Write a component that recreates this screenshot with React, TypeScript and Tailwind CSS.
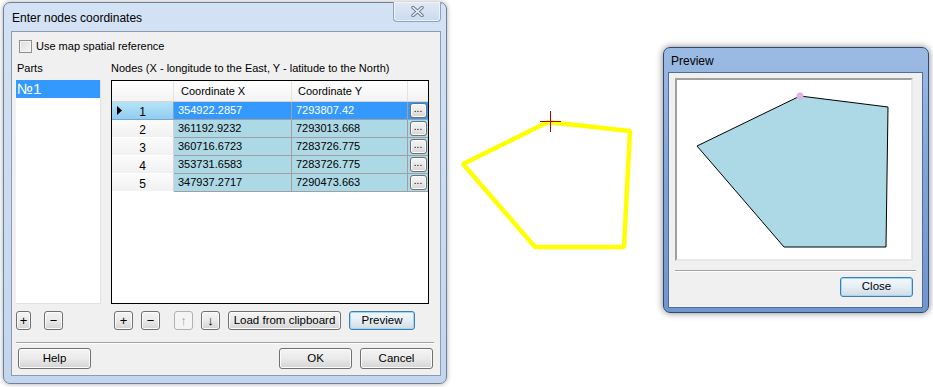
import React from "react";
import clsx from "clsx";

const rows = [
  ["1", "354922.2857", "7293807.42"],
  ["2", "361192.9232", "7293013.668"],
  ["3", "360716.6723", "7283726.775"],
  ["4", "353731.6583", "7283726.775"],
  ["5", "347937.2717", "7290473.663"],
];

interface BtnProps {
  className?: string;
  focused?: boolean;
  disabled?: boolean;
  children?: React.ReactNode;
}

const Btn: React.FC<BtnProps> = ({ className, focused, disabled, children }) => (
  <div
    className={clsx(
      "flex items-center justify-center rounded-[3px] border leading-none",
      disabled
        ? "border-[#adb2b5] bg-[#f4f4f4] text-[#a0a0a0]"
        : focused
        ? "border-[#3c7fb1] bg-linear-to-b from-[#f2f8fc] via-[#e6eef5] to-[#d2dbe3] shadow-[inset_0_0_0_1px_#9fd8f5] text-black"
        : "border-[#707070] bg-linear-to-b from-[#f4f4f4] via-[#eaeaea] to-[#d4d4d4] shadow-[inset_0_0_0_1px_#fbfbfb] text-black",
      className
    )}
  >
    {children}
  </div>
);

const CoordinatesDialog: React.FC = () => (
  <div className="ml-[3px] mt-[2px] w-[444px] h-[382px] shrink-0 flex flex-col rounded-[7px] border border-[#6f8099] bg-linear-to-b from-[#d3e2f4] to-[#c3d6ee] pl-[7px] pr-[5px] pb-[7px] shadow-[0_0_5px_rgba(0,0,0,0.35)]">
    {/* Title bar */}
    <div className="h-[28px] flex justify-between">
      <span className="self-center pl-[1px] pt-[2px] text-[12px] text-black">Enter nodes coordinates</span>
      <div className="-mt-[1px] w-[48px] h-[20px] flex items-center justify-center rounded-b-[4px] border border-t-0 border-[#8ea2bd] bg-linear-to-b from-[#e0eaf6] to-[#cbdaee] shadow-[inset_0_0_0_1px_#eef4fb]">
        <svg width="13" height="11" viewBox="0 0 13 11">
          <path d="M2 1.5 L11 9.5 M11 1.5 L2 9.5" stroke="#6a7a8e" strokeWidth="3.4" strokeLinecap="round" />
          <path d="M2 1.5 L11 9.5 M11 1.5 L2 9.5" stroke="#f4f7fb" strokeWidth="1.5" strokeLinecap="round" />
        </svg>
      </div>
    </div>

    {/* Client area */}
    <div className="w-[430px] h-[345px] border border-[#8d9bb0] bg-[#f0f0f0] flex flex-col text-[11px]">
      {/* Checkbox */}
      <div className="mt-[8px] ml-[7px] h-[13px] flex items-center gap-[4px]">
        <div className="w-[13px] h-[13px] border border-[#8e8f8f] bg-linear-to-br from-[#dcdcdc] to-[#f6f6f6] shadow-[inset_0_0_0_1px_#f4f4f4]" />
        <span className="leading-none text-black">Use map spatial reference</span>
      </div>

      <div className="mt-[8px] flex">
        {/* Parts */}
        <div className="ml-[4px] w-[85px] flex flex-col">
          <span className="h-[14px] pl-[1px] leading-[14px] text-black">Parts</span>
          <div className="mt-[5px] h-[224px] bg-white border-r border-b border-[#e2e2e2]">
            <div className="h-[18px] bg-[#3399ff] pl-[1px] text-[15px] leading-[18px] text-white">№1</div>
          </div>
          <div className="mt-[7px] flex gap-[13px]">
            <Btn className="w-[15px] h-[19px] text-[13px]">+</Btn>
            <Btn className="w-[19px] h-[19px] text-[13px]">−</Btn>
          </div>
        </div>

        {/* Nodes */}
        <div className="ml-[10px] w-[318px] flex flex-col">
          <span className="h-[14px] leading-[14px] text-black whitespace-nowrap">
            Nodes (X - longitude to the East, Y - latitude to the North)
          </span>
          <div className="mt-[5px] h-[224px] border border-black bg-white flex flex-col">
            {/* Header */}
            <div className="h-[21px] flex border-b border-[#d5d5d5] bg-linear-to-b from-white to-[#f3f3f3] text-[11px] text-black">
              <div className="w-[62px] border-r border-[#e3e3e3]" />
              <div className="w-[118px] pl-[7px] flex items-center border-r border-[#e3e3e3]">Coordinate X</div>
              <div className="w-[116px] pl-[6px] flex items-center border-r border-[#e3e3e3]">Coordinate Y</div>
              <div className="w-[18px]" />
            </div>
            {rows.map(([n, x, y], i) => {
              const sel = i === 0;
              return (
                <div key={n} className="h-[18px] flex text-[11px]">
                  <div
                    className={clsx(
                      "w-[62px] relative flex items-center justify-center border-r border-b",
                      sel
                        ? "bg-linear-to-b from-[#b8e3f8] to-[#8fcdf0] border-[#7aa7c4]"
                        : "bg-linear-to-b from-[#fbfbfb] to-[#f1f1f1] border-r-[#d5d5d5] border-b-white"
                    )}
                  >
                    {sel && (
                      <svg className="absolute left-[5px] top-[4px]" width="5" height="9" viewBox="0 0 5 9">
                        <path d="M0 0 L5 4.5 L0 9 Z" fill="#000" />
                      </svg>
                    )}
                    <span className="pt-[3px] text-[12px] text-black">{n}</span>
                  </div>
                  <div
                    className={clsx(
                      "w-[118px] pl-[4px] flex items-center border-r border-b border-[#a0a0a0]",
                      sel ? "bg-[#3399ff] text-white" : "bg-[#add8e6] text-black"
                    )}
                  >
                    {x}
                  </div>
                  <div
                    className={clsx(
                      "w-[116px] pl-[4px] flex items-center border-r border-b border-[#a0a0a0]",
                      sel ? "bg-[#3399ff] text-white" : "bg-[#add8e6] text-black"
                    )}
                  >
                    {y}
                  </div>
                  <div
                    className={clsx(
                      "w-[20px] flex items-center justify-center border-b border-[#a0a0a0]",
                      sel ? "bg-[#3399ff]" : "bg-[#add8e6]"
                    )}
                  >
                    <Btn className="w-[17px] h-[15px] items-end pb-[3px] text-[10px]">...</Btn>
                  </div>
                </div>
              );
            })}
          </div>
          <div className="mt-[7px] ml-[3px] flex gap-[8px]">
            <Btn className="w-[19px] h-[19px] text-[13px]">+</Btn>
            <Btn className="w-[19px] h-[19px] text-[13px] mr-[6px]">−</Btn>
            <Btn disabled className="w-[19px] h-[19px] text-[13px]">↑</Btn>
            <Btn className="w-[19px] h-[19px] text-[13px]">↓</Btn>
            <Btn className="w-[113px] h-[19px] text-[11.5px]">Load from clipboard</Btn>
            <Btn focused className="w-[66px] h-[19px] text-[11.5px]">Preview</Btn>
          </div>
        </div>
      </div>

      {/* Separator */}
      <div className="mt-[12px] ml-[4px] w-[418px] h-[2px] border-t border-[#a0a0a0] border-b border-b-white" />

      {/* Dialog buttons */}
      <div className="mt-[4px] pl-[6px] pr-[7px] flex text-[11.5px]">
        <Btn className="w-[73px] h-[21px]">Help</Btn>
        <div className="flex-1" />
        <Btn className="w-[73px] h-[21px]">OK</Btn>
        <Btn className="ml-[8px] w-[73px] h-[21px]">Cancel</Btn>
      </div>
    </div>
  </div>
);

const MapCanvas: React.FC = () => (
  <svg className="shrink-0" width="216" height="387" viewBox="0 0 216 387">
    <polygon
      points="101,122 183,131 177,247 88,247 16,164"
      fill="none"
      stroke="#ffff00"
      strokeWidth="4.5"
      strokeLinejoin="bevel"
    />
    <path d="M93 121.5 H114 M103.5 111 V132" stroke="#b40000" strokeWidth="1" />
  </svg>
);

const PreviewDialog: React.FC = () => (
  <div className="mt-[47px] w-[266px] h-[266px] shrink-0 flex flex-col rounded-[7px] border border-[#2e4a70] bg-linear-to-b from-[#9cbbe4] via-[#7ea3d6] to-[#6f96cf] pl-[4px] pr-[5px] pb-[4px] shadow-[0_0_7px_rgba(0,0,0,0.5)]">
    <div className="h-[24px] flex items-center">
      <span className="pl-[3px] pt-[1px] text-[12px] text-black">Preview</span>
    </div>
    <div className="w-[255px] h-[236px] border border-[#4f6d96] bg-[#f0f0f0] flex flex-col">
      <div className="mt-[5px] ml-[6px] w-[238px] h-[183px] border-2 border-t-[#a0a0a0] border-l-[#a0a0a0] border-r-[#e8e8e8] border-b-[#e8e8e8] bg-white">
        <svg width="234" height="179" viewBox="0 0 234 179">
          <polygon
            points="123,16 211,27 209,167 107,167 20,66"
            fill="#add8e6"
            stroke="#000"
            strokeWidth="1"
          />
          <circle cx="123" cy="16" r="3.5" fill="#dcb4e0" />
        </svg>
      </div>
      <div className="mt-[9px] ml-[6px] w-[241px] h-[2px] border-t border-[#a0a0a0] border-b border-b-white" />
      <div className="mt-[5px] pr-[9px] flex justify-end text-[11.5px]">
        <Btn focused className="w-[73px] h-[20px]">Close</Btn>
      </div>
    </div>
  </div>
);

export default function App() {
  return (
    <div className="w-[933px] h-[387px] bg-white flex items-start overflow-hidden font-['Liberation_Sans',Arial,sans-serif]">
      <CoordinatesDialog />
      <MapCanvas />
      <PreviewDialog />
    </div>
  );
}
